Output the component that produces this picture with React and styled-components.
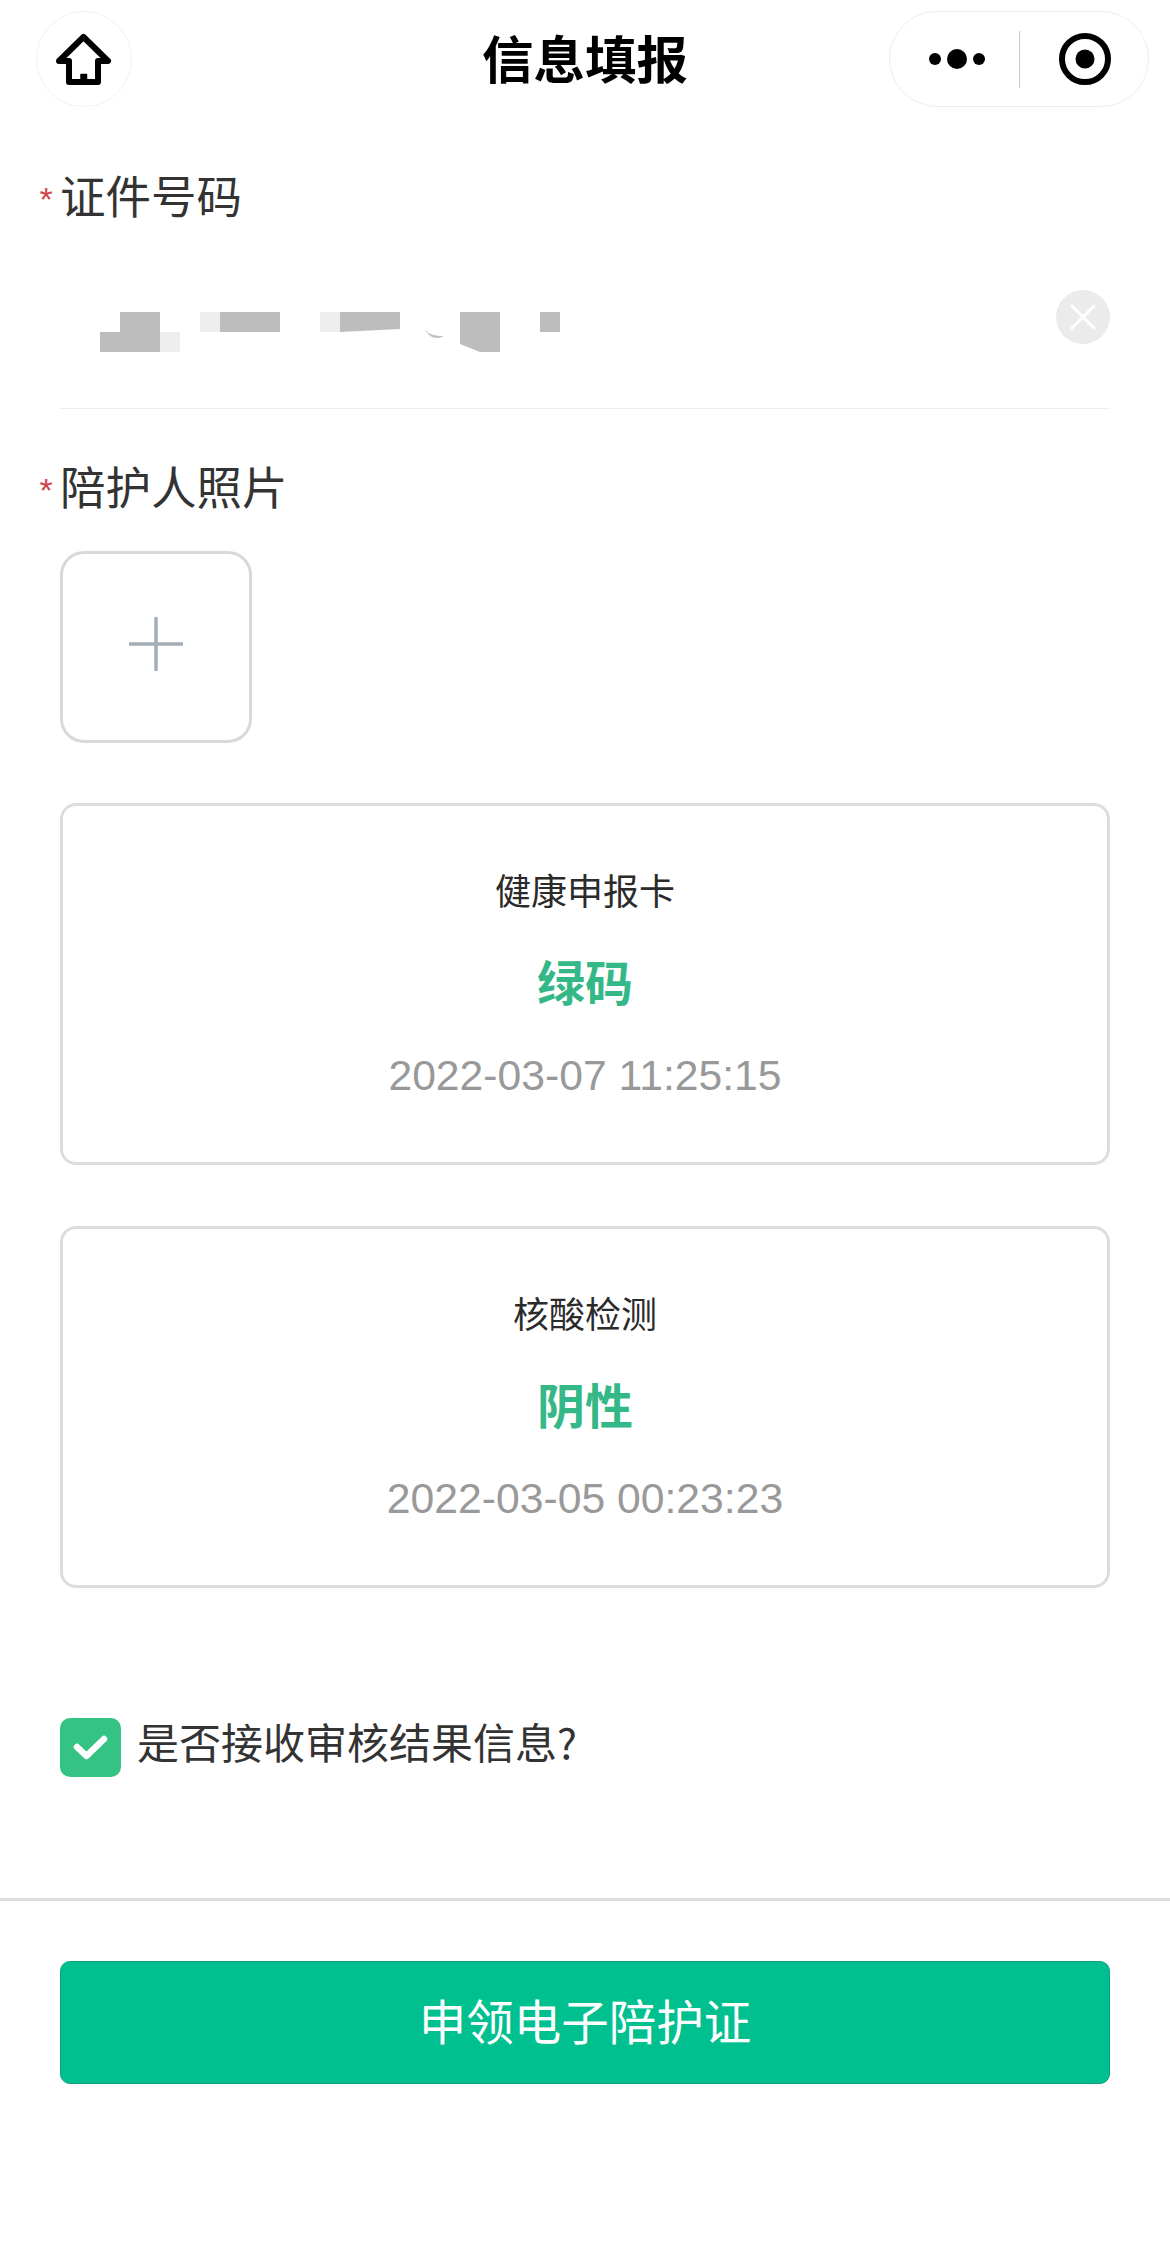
import React from "react";
import styled, { createGlobalStyle } from "styled-components";

const CJK = `"Noto Sans CJK SC", "Liberation Sans", sans-serif`;

const Global = createGlobalStyle`
  html, body { margin: 0; padding: 0; background: #fff; }
  * { box-sizing: border-box; }
  body { font-family: ${CJK}; }
`;

const Page = styled.div`
  width: 1170px;
  height: 2252px;
  background: #fff;
  overflow: hidden;
`;

const Nav = styled.header`
  display: grid;
  grid-template-columns: 1fr auto 1fr;
  align-items: center;
  height: 96px;
  margin: 11px 21px 0 36px;
`;

const HomeButton = styled.div`
  width: 96px;
  height: 96px;
  padding-top: 6px;
  border: 1px solid #f1f1f1;
  border-radius: 50%;
  display: flex;
  align-items: center;
  justify-content: center;
  justify-self: start;
`;

const Title = styled.h1`
  margin: -5px 0 0 -15px;
  font-size: 51.5px;
  line-height: 96px;
  font-weight: 700;
  color: #000;
`;

const Capsule = styled.div`
  justify-self: end;
  width: 260px;
  height: 96px;
  border: 1.5px solid #eeeeee;
  border-radius: 48px;
  display: flex;
  align-items: center;
`;

const CapsulePart = styled.div`
  width: 129.5px;
  height: 57px;
  padding-left: ${(p) => p.$inset}px;
  display: flex;
  align-items: center;
  justify-content: center;
`;

const CapsuleDivider = styled.div`
  width: 1px;
  height: 57px;
  background: #c8c8c8;
`;

const Form = styled.main`
  padding: 0 60px;
  display: flex;
  flex-direction: column;
`;

const FieldLabel = styled.div`
  display: flex;
  align-items: center;
  margin-top: ${(p) => p.$top}px;
  margin-left: -22px;
  font-size: 45.5px;
  line-height: 60px;
  color: #333;
`;

const Star = styled.span`
  width: 22px;
  padding-left: 1.5px;
  font-family: "Liberation Sans", sans-serif;
  font-size: 34px;
  line-height: 34px;
  color: #d0454a;
  height: 26px;
  margin-top: 2px;
`;

const InputRow = styled.div`
  height: 185px;
  border-bottom: 1.5px solid #eeeeee;
  display: flex;
  justify-content: space-between;
  align-items: flex-start;
`;

const Mosaic = styled.svg`
  display: block;
  margin: 88px 0 0 40px;
`;

const ClearIcon = styled.svg`
  display: block;
  margin: 66px 0 0 0;
`;

const UploadBox = styled.div`
  width: 192px;
  height: 192px;
  margin-top: 36px;
  padding-bottom: 7px;
  border: 3px solid #d9d9d9;
  border-radius: 24px;
  display: flex;
  align-items: center;
  justify-content: center;
`;

const Card = styled.section`
  height: 362px;
  margin-top: ${(p) => p.$top}px;
  border: 3px solid #dddddd;
  border-radius: 16px;
  padding-top: 58px;
  display: flex;
  flex-direction: column;
  align-items: center;
`;

const CardTitle = styled.div`
  font-size: 36px;
  line-height: 50px;
  color: #2b2b2b;
`;

const CardValue = styled.div`
  margin-top: 36px;
  font-size: 48px;
  line-height: 60px;
  font-weight: 700;
  color: #35b888;
`;

const CardTime = styled.div`
  margin-top: 40px;
  font-family: "Liberation Sans", sans-serif;
  font-size: 42.7px;
  line-height: 50px;
  color: #999;
`;

const CheckRow = styled.label`
  display: flex;
  align-items: center;
  gap: 16px;
  height: 59px;
  margin-top: 130px;
`;

const CheckBox = styled.span`
  width: 61px;
  height: 59px;
  border-radius: 10px;
  background: #35c383;
  display: flex;
  align-items: center;
  justify-content: center;
`;

const CheckText = styled.span`
  font-size: 42px;
  line-height: 50px;
  margin-top: -14px;
  color: #333;
`;

const Footer = styled.footer`
  margin-top: 121px;
  border-top: 3px solid #dddddd;
  padding: 60px 60px 0;
`;

const SubmitButton = styled.button`
  display: block;
  width: 100%;
  height: 123px;
  padding: 0 0 7px;
  border: 1.5px solid #12a07c;
  border-radius: 10px;
  background: #00c08f;
  color: #fff;
  font-family: ${CJK};
  font-size: 47.5px;
  font-weight: 400;
`;

const HomeIcon = () => (
  <svg width="60" height="60" viewBox="0 0 60 60" fill="none" stroke="#000" strokeWidth="6" strokeLinejoin="round" strokeLinecap="round">
    <path d="M5 29 L29.5 5 L54 29 H44 V50 H15 V29 Z" />
    <path d="M27 47 V42.5 H32.5 V47 Z" fill="#000" strokeWidth="1.5" />
  </svg>
);

const MoreIcon = () => (
  <svg width="60" height="24" viewBox="0 0 60 24" fill="#000">
    <circle cx="8" cy="12" r="6" />
    <circle cx="30" cy="12" r="10" />
    <circle cx="52" cy="12" r="6" />
  </svg>
);

const TargetIcon = () => (
  <svg width="54" height="54" viewBox="0 0 54 54">
    <circle cx="27" cy="27" r="23" fill="none" stroke="#000" strokeWidth="6" />
    <circle cx="27" cy="27" r="9.5" fill="#000" />
  </svg>
);

export default function App() {
  return (
    <Page>
      <Global />
      <Nav>
        <HomeButton>
          <HomeIcon />
        </HomeButton>
        <Title>信息填报</Title>
        <Capsule>
          <CapsulePart $inset={6}>
            <MoreIcon />
          </CapsulePart>
          <CapsuleDivider />
          <CapsulePart $inset={2}>
            <TargetIcon />
          </CapsulePart>
        </Capsule>
      </Nav>

      <Form>
        <FieldLabel $top={57}>
          <Star>*</Star>证件号码
        </FieldLabel>
        <InputRow>
          <Mosaic width="460" height="40" viewBox="0 0 460 40">
            <g fill="#eeeeee">
              <rect x="60" y="20" width="20" height="20" />
              <rect x="100" y="0" width="20" height="20" />
              <rect x="220" y="0" width="20" height="20" />
            </g>
            <g fill="#bdbdbd">
              <path d="M20 0 H60 V40 H0 V20 H20 Z" />
              <rect x="120" y="0" width="60" height="20" />
              <path d="M240 0 H300 V17 L240 20 Z" />
              <path d="M325 17 C329 23 334 24 344 24 C337 28 329 26 325 17 Z" />
              <path d="M360 0 H400 V40 H380 L360 32 Z" />
              <rect x="440" y="0" width="20" height="20" />
            </g>
          </Mosaic>
          <ClearIcon width="54" height="54" viewBox="0 0 54 54">
            <circle cx="27" cy="27" r="27" fill="#ebebeb" />
            <path d="M16 16 L38 38 M38 16 L16 38" stroke="#fff" strokeWidth="3" strokeLinecap="round" />
          </ClearIcon>
        </InputRow>

        <FieldLabel $top={46}>
          <Star>*</Star>陪护人照片
        </FieldLabel>
        <UploadBox>
          <svg width="54" height="54" viewBox="0 0 54 54">
            <path d="M27 1.5 V52.5 M1 27 H53" stroke="#a4adb5" strokeWidth="3.5" strokeLinecap="round" />
          </svg>
        </UploadBox>

        <Card $top={60}>
          <CardTitle>健康申报卡</CardTitle>
          <CardValue>绿码</CardValue>
          <CardTime>2022-03-07 11:25:15</CardTime>
        </Card>
        <Card $top={61}>
          <CardTitle>核酸检测</CardTitle>
          <CardValue>阴性</CardValue>
          <CardTime>2022-03-05 00:23:23</CardTime>
        </Card>

        <CheckRow>
          <CheckBox>
            <svg width="36" height="28" viewBox="0 0 36 28">
              <path d="M4 13 L13.5 22 L31 5" fill="none" stroke="#fff" strokeWidth="6.5" strokeLinecap="round" strokeLinejoin="round" />
            </svg>
          </CheckBox>
          <CheckText>是否接收审核结果信息?</CheckText>
        </CheckRow>
      </Form>

      <Footer>
        <SubmitButton>申领电子陪护证</SubmitButton>
      </Footer>
    </Page>
  );
}
